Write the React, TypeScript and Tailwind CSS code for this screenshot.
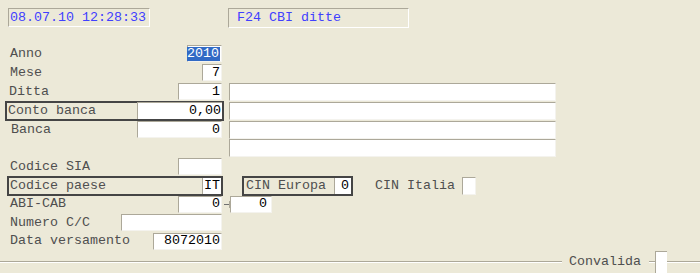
import React from "react";

const fieldBase =
  "h-[17px] bg-white border-t border-l border-[#aca899] border-r border-b border-r-[#f4f3ee] border-b-[#f4f3ee] flex items-center justify-end pr-[1px] text-black";

function Row({ h, children }: { h: string; children: React.ReactNode }) {
  return <div className={`flex items-center ${h}`}>{children}</div>;
}

function Label({ children, cls = "pl-[10px]" }: { children: React.ReactNode; cls?: string }) {
  return <span className={`text-[#4f4f4f] whitespace-pre ${cls}`}>{children}</span>;
}

function LongField() {
  return <div className={`${fieldBase} w-[327px] ml-[5px] h-[18px]`} />;
}

export default function App() {
  return (
    <div
      className="w-[700px] h-[273px] bg-[#ece9d8] overflow-hidden text-[13.333px] leading-none flex flex-col"
      style={{ fontFamily: '"Liberation Mono", "Courier New", monospace' }}
    >
      {/* header */}
      <div className="flex items-start pt-[8px] pl-[8px] h-[44px]">
        <div className="w-[142px] h-[19px] border-t border-l border-[#aca899] border-r border-b border-r-white border-b-white flex items-center pl-[1px] text-[#4040ff]">
          08.07.10 12:28:33
        </div>
        <div className="ml-[78px] w-[181px] h-[20px] border-t border-l border-[#aca899] border-r border-b border-r-white border-b-white flex items-center pl-[8px] text-[#4040ff]">
          F24 CBI ditte
        </div>
      </div>

      {/* Anno */}
      <Row h="h-[19px]">
        <div className="w-[224px] flex items-center justify-between pr-[2px]">
          <Label>Anno</Label>
          <div className={`${fieldBase} w-[35px] pr-0`}>
            <span className="bg-[#316ac5] text-white h-[14px] flex items-center justify-end w-[33px] pr-[1px]">2010</span>
          </div>
        </div>
      </Row>

      {/* Mese */}
      <Row h="h-[19px]">
        <div className="w-[224px] flex items-center justify-between pr-[2px]">
          <Label>Mese</Label>
          <div className={`${fieldBase} w-[20px]`}>7</div>
        </div>
      </Row>

      {/* Ditta */}
      <Row h="h-[19px]">
        <div className="w-[224px] flex items-center justify-between pr-[2px]">
          <Label cls="pl-[9px]">Ditta</Label>
          <div className={`${fieldBase} w-[44px]`}>1</div>
        </div>
        <LongField />
      </Row>

      {/* Conto banca */}
      <Row h="h-[19px]">
        <div className="w-[224px] pl-[5px]">
          <div className="h-[20px] border-2 border-[#454545] flex items-center justify-between">
            <Label cls="pl-[1px]">Conto banca</Label>
            <div className={`${fieldBase} w-[85px] h-[16px] border-r-0 border-b-0`}>0,00</div>
          </div>
        </div>
        <LongField />
      </Row>

      {/* Banca */}
      <Row h="h-[19px]">
        <div className="w-[224px] flex items-center justify-between pr-[2px]">
          <Label cls="pl-[11px]">Banca</Label>
          <div className={`${fieldBase} w-[85px]`}>0</div>
        </div>
        <LongField />
      </Row>

      {/* blank */}
      <Row h="h-[18px]">
        <div className="w-[224px]" />
        <LongField />
      </Row>

      {/* Codice SIA */}
      <Row h="h-[19px]">
        <div className="w-[224px] flex items-center justify-between pr-[2px]">
          <Label>Codice SIA</Label>
          <div className={`${fieldBase} w-[44px]`} />
        </div>
      </Row>

      {/* Codice paese + CIN */}
      <Row h="h-[19px]">
        <div className="w-[224px] pl-[7px] pr-[1px]">
          <div className="h-[20px] border-2 border-[#454545] flex items-center justify-between">
            <Label cls="pl-[1px]">Codice paese</Label>
            <div className="h-[16px] w-[19px] bg-white border-l border-[#aca899] flex items-center justify-end pr-[1px] text-black">IT</div>
          </div>
        </div>
        <div className="ml-[18px] w-[111px] h-[20px] border-2 border-[#454545] flex items-center justify-between">
          <Label cls="pl-[2px]">CIN Europa</Label>
          <div className="h-[16px] w-[17px] bg-white border-l border-[#aca899] flex items-center justify-end pr-[2px] text-black">0</div>
        </div>
        <Label cls="ml-[22px]">CIN Italia</Label>
        <div className={`${fieldBase} w-[14px] ml-[7px] h-[18px]`} />
      </Row>

      {/* ABI-CAB */}
      <Row h="h-[18px]">
        <div className="w-[224px] flex items-center justify-between pr-[2px]">
          <Label>ABI-CAB</Label>
          <div className={`${fieldBase} w-[44px]`}>0</div>
        </div>
        <div className="w-[5px] h-[1px] bg-[#707070]" />
        <div className="w-[1px] h-[7px] bg-[#aca899]" />
        <div className={`${fieldBase} w-[42px]`}>
          <span className="pr-[3px]">0</span>
        </div>
      </Row>

      {/* Numero C/C */}
      <Row h="h-[19px]">
        <div className="w-[224px] flex items-center justify-between pr-[2px]">
          <Label>Numero C/C</Label>
          <div className={`${fieldBase} w-[101px]`} />
        </div>
      </Row>

      {/* Data versamento */}
      <Row h="h-[18px]">
        <div className="w-[224px] flex items-center justify-between pr-[2px]">
          <Label>Data versamento</Label>
          <div className={`${fieldBase} w-[69px]`}>8072010</div>
        </div>
      </Row>

      {/* bottom convalida */}
      <div className="mt-[1px] h-[22px] flex items-center">
        <div className="w-[562px] border-t border-[#aca899] border-b border-b-white h-[2px]" />
        <Label cls="ml-[7px]">Convalida</Label>
        <div className="ml-[8px] w-[6px] border-t border-[#aca899] border-b border-b-white h-[2px]" />
        <div className="w-[12px] h-[22px] bg-white border-t border-l border-[#aca899]" />
        <div className="flex-1 border-t border-[#aca899] border-b border-b-white h-[2px]" />
      </div>
    </div>
  );
}
